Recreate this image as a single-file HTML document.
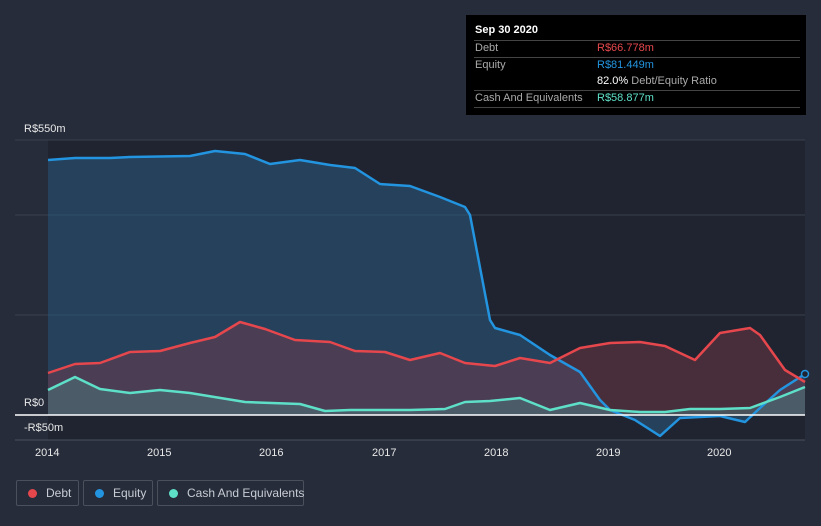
<!DOCTYPE html>
<html><head><meta charset="utf-8"><style>
body{margin:0;width:821px;height:526px;background:#262c3a;font-family:"Liberation Sans",sans-serif;overflow:hidden;position:relative}
.t{position:absolute;left:466px;top:15px;width:340px;height:100px;background:#000;color:#aaa;font-size:11px}
.t .r{position:absolute;left:8px;right:6px;border-bottom:1px solid #444;height:16px}
.lg{position:absolute;top:480px;height:26px;border:1px solid #4a505c;border-radius:2px;color:#c8ccd4;font-size:12px;line-height:24px;box-sizing:border-box;white-space:nowrap}
.lg i{display:inline-block;width:9px;height:9px;border-radius:50%;margin:0 9px 0 11px;vertical-align:-1px}
.ax{position:absolute;color:#e8e8e8;font-size:11px}
</style></head><body>
<svg width="821" height="526" style="position:absolute;left:0;top:0">
<rect x="48" y="140" width="757" height="300" fill="#1f2430"/>
<line x1="15" y1="140" x2="805" y2="140" stroke="#3a404c"/>
<line x1="15" y1="215" x2="805" y2="215" stroke="#3a404c"/>
<line x1="15" y1="315" x2="805" y2="315" stroke="#3a404c"/>
<line x1="15" y1="440" x2="805" y2="440" stroke="#4a505c"/>
<path d="M48,160 L75,158 110,158 130,157 190,156 215,151 245,154 270,164 300,160 330,165 355,168 380,184 410,186 440,197 465,207 470,215 490,320 495,328 520,335 550,355 580,372 600,400 610,410 635,420 660,436 680,418 720,416 745,422 760,408 780,390 805,374 L805,415 48,415Z" fill="#2a5a80" fill-opacity="0.55"/>
<path d="M48,373 L75,364 100,363 130,352 160,351 190,343 215,337 240,322 265,329 295,340 330,342 355,351 385,352 410,360 440,353 465,363 495,366 520,358 550,363 580,348 610,343 640,342 665,346 695,360 720,333 750,328 760,335 785,370 805,382 L805,415 48,415Z" fill="#7a3a4a" fill-opacity="0.45"/>
<path d="M48,390 L75,377 100,389 130,393 160,390 190,393 245,402 300,404 325,411 350,410 410,410 445,409 465,402 490,401 520,398 550,410 580,403 610,410 640,412 665,412 690,409 720,409 750,408 780,397 805,387 L805,415 48,415Z" fill="#4a8a8a" fill-opacity="0.4"/>
<path d="M48,160 L75,158 110,158 130,157 190,156 215,151 245,154 270,164 300,160 330,165 355,168 380,184 410,186 440,197 465,207 470,215 490,320 495,328 520,335 550,355 580,372 600,400 610,410 635,420 660,436 680,418 720,416 745,422 760,408 780,390 805,374" fill="none" stroke="#2394df" stroke-width="2.5" stroke-linejoin="round"/>
<path d="M48,373 L75,364 100,363 130,352 160,351 190,343 215,337 240,322 265,329 295,340 330,342 355,351 385,352 410,360 440,353 465,363 495,366 520,358 550,363 580,348 610,343 640,342 665,346 695,360 720,333 750,328 760,335 785,370 805,382" fill="none" stroke="#e5474d" stroke-width="2.5" stroke-linejoin="round"/>
<path d="M48,390 L75,377 100,389 130,393 160,390 190,393 245,402 300,404 325,411 350,410 410,410 445,409 465,402 490,401 520,398 550,410 580,403 610,410 640,412 665,412 690,409 720,409 750,408 780,397 805,387" fill="none" stroke="#5ee0c8" stroke-width="2.5" stroke-linejoin="round"/>
<line x1="15" y1="415" x2="805" y2="415" stroke="#fff" stroke-width="1.5"/>
<circle cx="805" cy="374" r="3.5" fill="#1f2430" stroke="#2394df" stroke-width="1.5"/>
</svg>
<div class="ax" style="left:24px;top:123px">R$550m</div>
<div class="ax" style="left:24px;top:397px">R$0</div>
<div class="ax" style="left:24px;top:422px">-R$50m</div>
<div class="ax" style="left:35px;top:447px">2014</div>
<div class="ax" style="left:147px;top:447px">2015</div>
<div class="ax" style="left:259px;top:447px">2016</div>
<div class="ax" style="left:372px;top:447px">2017</div>
<div class="ax" style="left:484px;top:447px">2018</div>
<div class="ax" style="left:596px;top:447px">2019</div>
<div class="ax" style="left:707px;top:447px">2020</div>
<div class="t">
<div style="position:absolute;left:9px;top:9px;color:#fff;font-weight:bold">Sep 30 2020</div>
<div class="r" style="top:9px"></div><div class="r" style="top:26px"></div><div class="r" style="top:59px"></div><div class="r" style="top:76px"></div>
<div style="position:absolute;left:9px;top:27px">Debt</div><div style="position:absolute;left:131px;top:27px;color:#e5474d">R$66.778m</div>
<div style="position:absolute;left:9px;top:44px">Equity</div><div style="position:absolute;left:131px;top:44px;color:#2394df">R$81.449m</div>
<div style="position:absolute;left:131px;top:60px"><span style="color:#fff">82.0%</span> Debt/Equity Ratio</div>
<div style="position:absolute;left:9px;top:77px">Cash And Equivalents</div><div style="position:absolute;left:131px;top:77px;color:#5ee0c8">R$58.877m</div>
</div>
<div class="lg" style="left:16px;width:63px"><i style="background:#e5474d"></i>Debt</div>
<div class="lg" style="left:83px;width:70px"><i style="background:#2394df"></i>Equity</div>
<div class="lg" style="left:157px;width:147px"><i style="background:#5ee0c8"></i>Cash And Equivalents</div>
</body></html>
